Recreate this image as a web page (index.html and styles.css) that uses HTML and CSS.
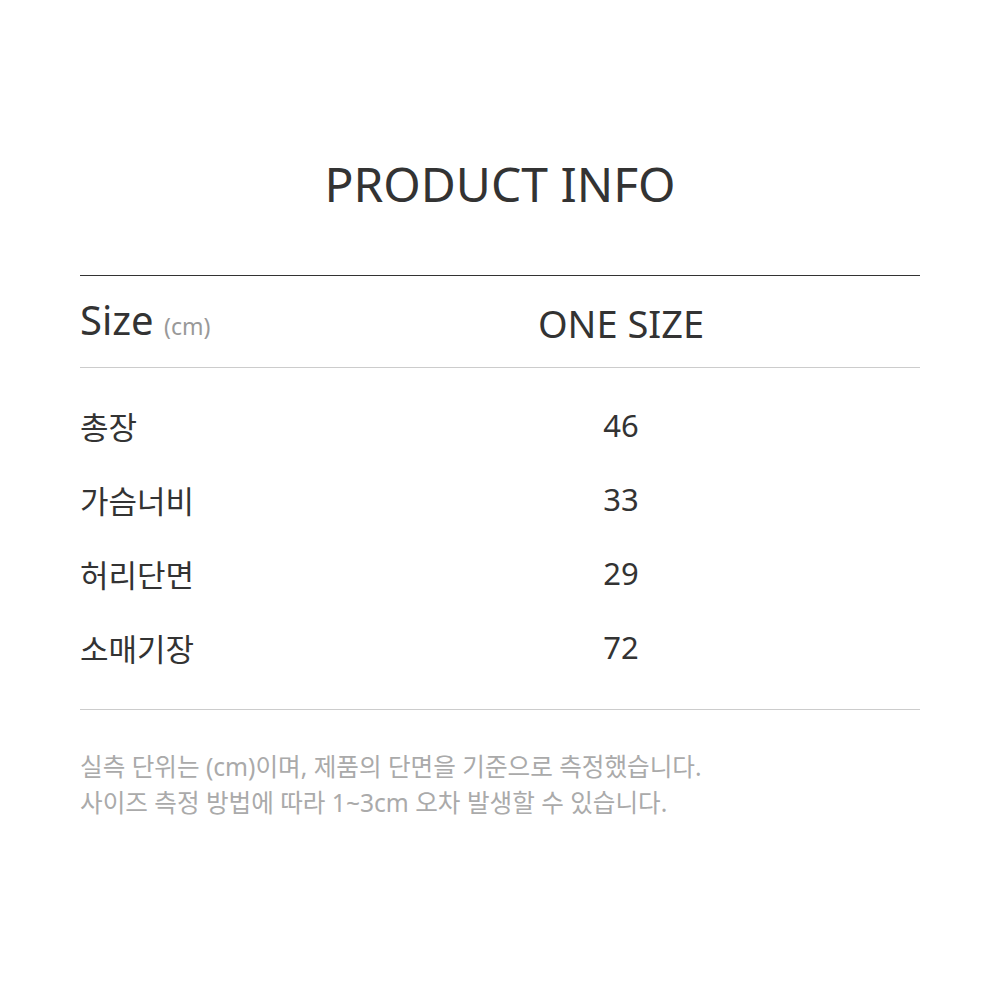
FILE: index.html
```html
<!DOCTYPE html>
<html lang="ko">
<head>
<meta charset="utf-8">
<link rel="stylesheet" href="styles.css">
</head>
<body>
<main class="page">
  <h1 class="title">PRODUCT INFO</h1>
  <section class="table">
    <div class="head">
      <div class="label">Size <span class="unit">(cm)</span></div>
      <div class="value">ONE SIZE</div>
    </div>
    <div class="body">
      <div class="row"><div class="name">총장</div><div class="num">46</div></div>
      <div class="row"><div class="name">가슴너비</div><div class="num">33</div></div>
      <div class="row"><div class="name">허리단면</div><div class="num">29</div></div>
      <div class="row"><div class="name">소매기장</div><div class="num">72</div></div>
    </div>
  </section>
  <p class="note">실측 단위는 (cm)이며, 제품의 단면을 기준으로 측정했습니다.<br>사이즈 측정 방법에 따라 1~3cm 오차 발생할 수 있습니다.</p>
</main>
</body>
</html>
```

FILE: styles.css
```css
* { box-sizing: border-box; }
html, body { margin: 0; padding: 0; background: #fff; }
body {
  font-family: "Noto Sans", "Noto Sans CJK KR", sans-serif;
  color: #333;
}
.page {
  width: 840px;
  margin: 0 auto;
  padding-top: 154px;
}
.title {
  margin: 0 0 61px;
  height: 60px;
  line-height: 60px;
  font-size: 48px;
  font-weight: 400;
  text-align: center;
  color: #333;
}
.table {
  border-top: 1px solid #333;
  border-bottom: 1px solid #ccc;
}
.head {
  display: grid;
  grid-template-columns: 242px 1fr;
  align-items: center;
  height: 92px;
  padding-top: 2px;
  border-bottom: 1px solid #ccc;
}
.label {
  font-size: 40px;
  line-height: 48px;
  color: #333;
}
.unit {
  font-size: 23px;
  color: #999;
  margin-left: 0;
}
.value {
  font-size: 38px;
  line-height: 48px;
  text-align: center;
}
.body {
  padding: 20px 0 25px;
}
.row {
  display: grid;
  grid-template-columns: 242px 1fr;
  align-items: center;
  height: 74px;
  font-size: 31px;
}
.num { text-align: center; }
.note {
  margin: 39px 0 0;
  font-size: 24.6px;
  line-height: 36px;
  color: #aaa;
}
```
